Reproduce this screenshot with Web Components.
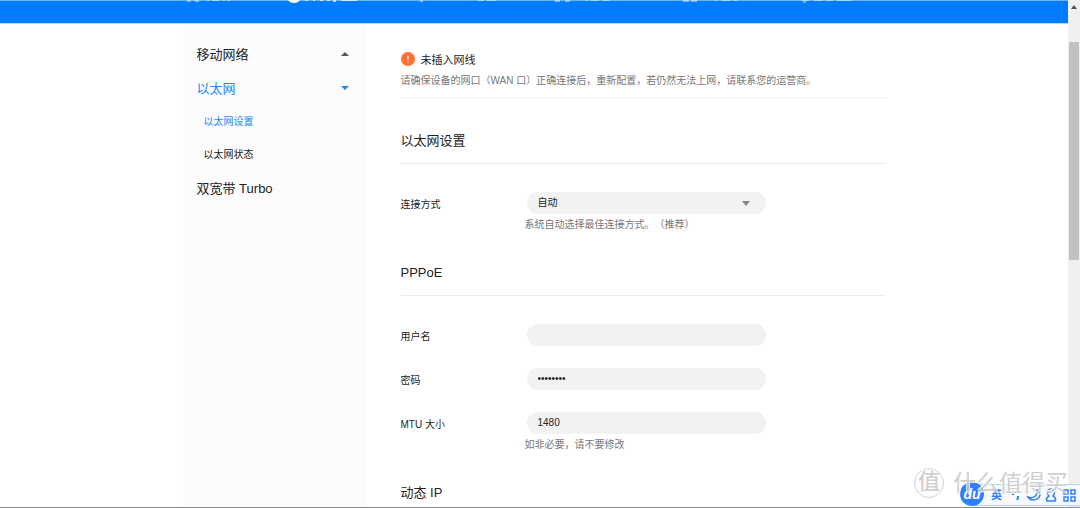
<!DOCTYPE html>
<html lang="zh-CN">
<head>
<meta charset="utf-8">
<meta name="viewport" content="width=device-width, initial-scale=1">
<title>以太网设置</title>
<style>
body { margin: 0; font-family: "Liberation Sans", "Noto Sans CJK SC", sans-serif; font-size: 10px; color: #222; background: #fff; }
</style>
</head>
<body>
<router-app></router-app>
<script>
const define = (name, html, setup) => {
  const tpl = document.createElement('template');
  tpl.innerHTML = html;
  customElements.define(name, class extends HTMLElement {
    constructor() {
      super();
      this.attachShadow({ mode: 'open' }).append(tpl.content.cloneNode(true));
    }
    connectedCallback() { if (setup) setup(this, this.shadowRoot); }
  });
};

/* Blue navigation bar, scrolled so that only the feet of its items show */
define('top-bar', `
<style>
:host { display: block; height: 24px; background: #007dff; border-top: 1px solid #6bb4ff; border-bottom: 1px solid #b5d9ff; box-sizing: border-box; }
.feet { width: 704px; margin: -1px auto 0; }
svg { display: block; }
</style>
<div class="feet"><svg width="704" height="4" aria-hidden="true">
<g fill="#fff" opacity=".45">
<path d="M5 0h4v2h-4zM11 0h3v1h-3zM13 0h4v2h-4zM25 0h2v1h-2zM30 0h7v1h-7zM41 0h2v1h-2zM45 0h3v1h-3zM238 0h3v2h-3zM295 0h7v1h-7zM305 0h9v1h-9z"/>
<path d="M373 0h5v2h-5zM383 0h5v2h-5zM403 0h3v1h-3zM409 0h8v1h-8zM421 0h7v1h-7zM501 0h6v2h-6zM509 0h6v2h-6zM533 0h3v1h-3zM540 0h8v1h-8zM551 0h5v1h-5zM619 0h8v1h-8zM621 1h3v2h-3zM632 0h9v1h-9zM644 0h7v1h-7zM655 0h15v1h-15z"/>
</g>
<g fill="#fff"><path d="M106 0h12q-2 3-6 3t-6-3z"/><path opacity=".7" d="M123 0h3v1h-3zM131 0h2v1h-2zM138 0h3v1h-3zM145 0h3v1h-3zM151 0h3v2h-3zM159 0h16v1h-16z"/></g>
</svg></div>`);

define('nav-item', `
<style>
:host { display: block; }
a { display: flex; align-items: center; justify-content: space-between; height: 34px; padding: 0 16px 0 14px; font-size: 13px; color: #222; text-decoration: none; }
:host([sub]) a { height: 33px; padding-left: 21px; font-size: 10px; }
:host([active]) a { color: #1a86ff; }
svg { display: none; width: 10px; height: 6px; fill: currentColor; margin-top: 2px; }
:host([arrow]) svg { display: block; }
:host([arrow=up]) svg { transform: rotate(180deg); color: #555; }
</style>
<a href="#"><slot></slot><svg viewBox="0 0 10 6" aria-hidden="true"><path d="M1 1h8L5 5z"/></svg></a>`);

define('side-menu', `
<style>
:host { display: block; background: #fcfcfc; }
nav { padding-top: 12px; }
</style>
<nav><slot></slot></nav>`);

define('alert-box', `
<style>
:host { display: block; padding: 24px 0 5px; border-bottom: 1px solid #f2f2f2; }
.title { display: flex; align-items: center; gap: 6px; height: 22px; font-size: 11px; }
svg { width: 14px; height: 14px; }
p { margin: 0; line-height: 22px; color: #777; }
</style>
<div class="title"><svg viewBox="0 0 14 14" aria-hidden="true"><circle cx="7" cy="7" r="7" fill="#ff6f32"/><path d="M7 3.5v4.3M7 9.3v1.2" stroke="#fff" stroke-width="1.2"/></svg><slot name="title"></slot></div>
<p><slot></slot></p>`);

define('form-section', `
<style>
:host { display: block; margin-bottom: 15px; }
h2 { margin: 0 0 28px; font-size: 13px; font-weight: 400; line-height: 44px; border-bottom: 1px solid #ebebeb; }
.rows { display: grid; gap: 18px; }
</style>
<h2><slot name="title"></slot></h2>
<div class="rows"><slot></slot></div>`);

define('form-field', `
<style>
:host { display: grid; grid-template-columns: 124px 1fr; }
label { line-height: 26px; }
.control { position: relative; width: 239px; margin-left: 2px; }
input, select { display: block; appearance: none; width: 100%; height: 22px; box-sizing: border-box; padding: 0 11px 2px; border: 0; border-radius: 11px; background: #f2f2f2; font: inherit; color: #222; outline: 0; }
svg { position: absolute; right: 16px; top: 9px; width: 8px; height: 5px; fill: #888; pointer-events: none; }
.hint { line-height: 22px; color: #777; text-spacing-trim: space-all; }
</style>
<label for="c"></label>
<div><div class="control"></div><div class="hint"><slot></slot></div></div>`,
(el, root) => {
  root.querySelector('label').textContent = el.getAttribute('label');
  const value = el.getAttribute('value') || '';
  const type = el.getAttribute('type');
  const box = root.querySelector('.control');
  if (!el.textContent) root.querySelector('.hint').remove();
  box.innerHTML = type === 'select'
    ? `<select id="c"><option>${value}</option></select><svg viewBox="0 0 8 5" aria-hidden="true"><path d="M0 0h8L4 5z"/></svg>`
    : `<input id="c" type="${type}" value="${value}">`;
});
customElements.whenDefined('form-field');

define('scroll-rail', `
<style>
:host { display: block; background: #f0f0f0; padding: 0 1px; }
svg { display: block; width: 10px; height: 42px; fill: #555; }
.thumb { height: 43vh; background: #c1c1c1; }
</style>
<svg viewBox="0 0 10 42" aria-hidden="true"><path d="M2 9l3-4 3 4z"/></svg><div class="thumb"></div>`);

/* Input-method toolbar floating over the page corner */
define('ime-bar', `
<style>
:host { position: absolute; right: 0; bottom: 1px; width: 108px; height: 22px; box-sizing: border-box; border: 1px solid #b8d3fb; border-right: 0; background: #f8f9fd; color: #2f80f7; display: flex; align-items: center; }
.logo { flex: none; width: 24px; height: 24px; margin: -2px 7px 0 -13px; border-radius: 50%; background: #2f80ff; color: #fff; font: italic bold 14px/24px "Liberation Sans", sans-serif; text-align: center; }
.lang { font-size: 11px; font-weight: 700; line-height: 20px; }
svg { width: 78px; height: 20px; fill: none; stroke: currentColor; stroke-width: 2; }
</style>
<span class="logo">du</span><span class="lang">英</span>
<svg viewBox="0 0 78 20" aria-hidden="true"><circle cx="11" cy="9" r="1.3" fill="currentColor" stroke="none"/><path d="M16 11v2l-1 2"/><path d="M35 5c1 6-4 9-9 7 3 5 12 3 12-3 0-2-1-3-3-4z" stroke-width="1.5"/><path d="M45 16c-2-3 1-4 2-5-3-3-1-7 2-7s5 4 2 7c1 1 4 2 2 5z" stroke-width="1.5"/><path d="M62 5h4v4h-4zM69 5h4v4h-4zM62 12h4v4h-4zM69 12h4v4h-4z" stroke-width="1.5"/></svg>`);

define('site-mark', `
<style>
:host { position: absolute; right: 12px; bottom: 9px; display: flex; align-items: center; gap: 9px; color: #c8c8c8; pointer-events: none; opacity: .85; text-shadow: 1px 1px 0 #fff, -1px -1px 0 #fff; }
.seal { width: 30px; height: 30px; box-sizing: border-box; border: 1px solid #ccc; border-radius: 50%; font-size: 22px; line-height: 26px; text-align: center; font-weight: 500; }
.name { font-size: 23px; line-height: 30px; }
</style>
<span class="seal">值</span><span class="name">什么值得买</span>`);

define('router-app', `
<style>
:host { position: relative; display: grid; grid-template-columns: 1fr 12px; height: 100vh; overflow: hidden; box-sizing: border-box; border-bottom: 1px solid #8c8c8c; }
.page { min-width: 0; min-height: 0; overflow: hidden; display: flex; flex-direction: column; }
top-bar { flex: none; }
.body { flex: none; display: grid; grid-template-columns: 183px 1fr; column-gap: 35px; width: 100%; max-width: 703px; margin: 0 auto; }
alert-box { margin-bottom: 21px; }
</style>
<div class="page">
<top-bar></top-bar>
<div class="body">
<side-menu>
<nav-item arrow="up">移动网络</nav-item>
<nav-item arrow="down" active>以太网</nav-item>
<nav-item sub active>以太网设置</nav-item>
<nav-item sub>以太网状态</nav-item>
<nav-item>双宽带 Turbo</nav-item>
</side-menu>
<main>
<alert-box><span slot="title">未插入网线</span>请确保设备的网口（WAN 口）正确连接后，重新配置，若仍然无法上网，请联系您的运营商。</alert-box>
<form-section><span slot="title">以太网设置</span>
<form-field label="连接方式" type="select" value="自动">系统自动选择最佳连接方式。（推荐）</form-field>
</form-section>
<form-section><span slot="title">PPPoE</span>
<form-field label="用户名" type="text"></form-field>
<form-field label="密码" type="password" value="12345678"></form-field>
<form-field label="MTU 大小" type="text" value="1480">如非必要，请不要修改</form-field>
</form-section>
<form-section><span slot="title">动态 IP</span></form-section>
</main>
</div>
</div>
<scroll-rail></scroll-rail>
<ime-bar></ime-bar>
<site-mark></site-mark>`);
</script>
</body>
</html>
